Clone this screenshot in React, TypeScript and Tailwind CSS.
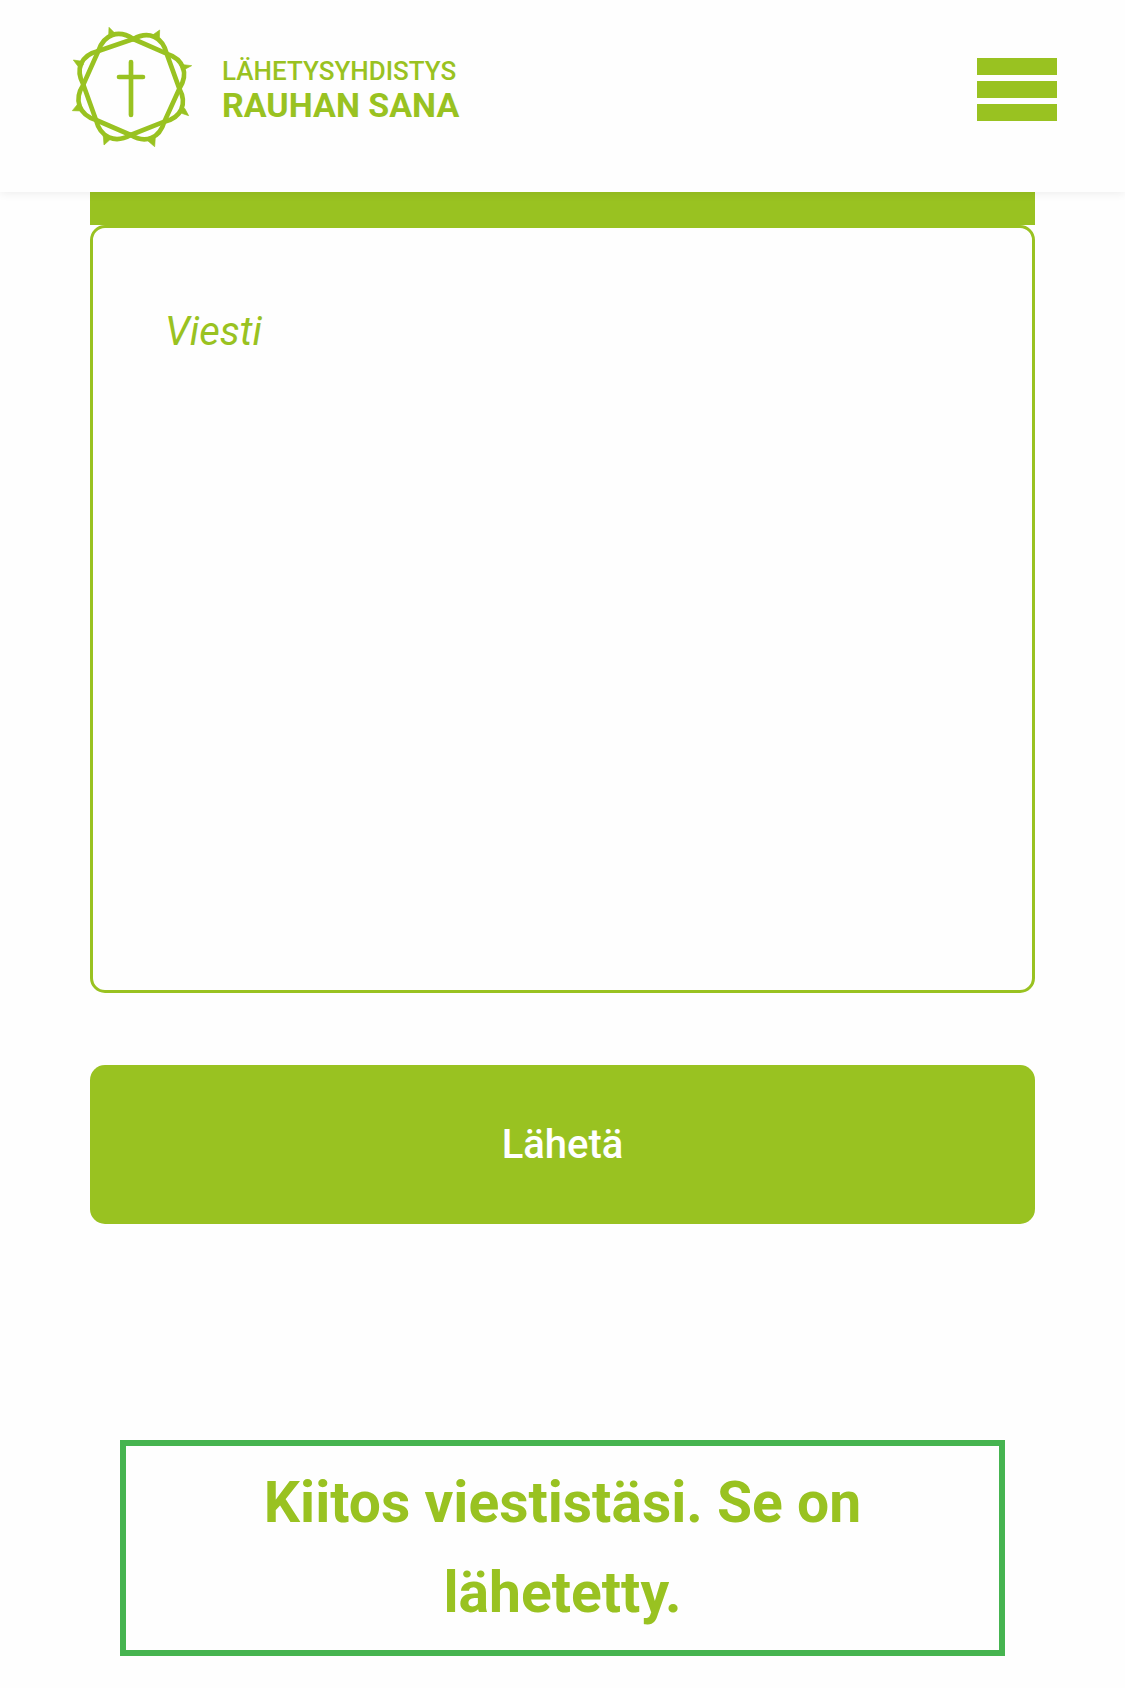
const crownNodes = [
  [220, 72],
  [320, 116],
  [358, 221],
  [313, 320],
  [212, 360],
  [108, 315],
  [70, 209],
  [115, 108],
];

const thorns = [
  "M147 37 L162 52 L164 60 L146 64 Z",
  "M299 45 L298 72 L290 74 L278 60 Z",
  "M395 152 L372 164 L364 165 L360 148 Z",
  "M386 302 L356 292 L362 280 L374 280 Z",
  "M284 395 L264 378 L264 368 L286 366 Z",
  "M132 390 L130 364 L138 356 L152 372 Z",
  "M37 287 L54 266 L62 266 L68 288 Z",
  "M40 135 L67 139 L70 150 L57 158 Z",
];

// Rounded branch bulging outwards over one side of the straight-branched octagon.
function arc(i: number) {
  const from = crownNodes[i];
  const to = crownNodes[(i + 1) % crownNodes.length];
  const dx = to[0] - from[0];
  const dy = to[1] - from[1];
  const along = 0.29;
  const out = 0.38;
  const c1 = [from[0] + along * dx + out * dy, from[1] + along * dy - out * dx];
  const c2 = [to[0] - along * dx + out * dy, to[1] - along * dy - out * dx];
  return `M${from.join(" ")} C${c1.join(" ")} ${c2.join(" ")} ${to.join(" ")}`;
}

function Crown() {
  return (
    <svg viewBox="30 30 372 372" className="size-31 shrink-0" aria-hidden="true">
      <g fill="none" stroke="#99c221" strokeWidth="14" strokeLinejoin="round" strokeLinecap="round">
        <polygon points={crownNodes.map((p) => p.join(",")).join(" ")} />
        {crownNodes.map((_, i) => (
          <path key={i} d={arc(i)} />
        ))}
        <path d="M213 141 V300 M177 186 H249" />
      </g>
      <g fill="#99c221" stroke="#99c221" strokeWidth="2" strokeLinejoin="round">
        {thorns.map((d) => (
          <path key={d} d={d} />
        ))}
      </g>
    </svg>
  );
}

export default function App() {
  return (
    <div className="min-h-screen bg-[#fefefe] font-[Roboto,sans-serif] text-[#99c221]">
      <header className="relative flex h-48 items-start justify-between bg-[#fefefe] pr-17 pl-[70px] shadow-[0_0_10px_rgba(0,0,0,0.09)]">
        <a href="#" className="flex items-start gap-7 pt-[25px]">
          <Crown />
          <span className="flex flex-col pt-7 whitespace-nowrap">
            <span className="text-[26px] leading-9 font-medium">LÄHETYSYHDISTYS</span>
            <span className="text-[34px] leading-8 font-bold">RAUHAN SANA</span>
          </span>
        </a>
        <button type="button" aria-label="Valikko" className="mt-[58px] flex w-20 flex-col gap-[6px]">
          <span className="h-[17px] w-full bg-[#99c221]" />
          <span className="h-[17px] w-full bg-[#99c221]" />
          <span className="h-[17px] w-full bg-[#99c221]" />
        </button>
      </header>
      <main className="px-[90px]">
        <form onSubmit={(e) => e.preventDefault()}>
          <div className="h-[33px] bg-[#99c221]" />
          <textarea
            aria-label="Viesti"
            placeholder="Viesti"
            className="block h-[768px] w-full resize-none rounded-[15px] border-3 border-[#99c221] bg-[#fefefe] px-18 py-[74px] text-[40px] leading-[60px] italic outline-none placeholder:text-[#99c221] placeholder:opacity-100"
          />
          <button
            type="submit"
            className="mt-18 block h-[159px] w-full rounded-[15px] bg-[#99c221] text-[40px] leading-[60px] font-medium text-white"
          >
            Lähetä
          </button>
        </form>
        <div
          role="status"
          className="mx-[30px] mt-54 border-6 border-[#46b450] px-24 py-3 text-center text-[57px] leading-[90px] font-bold"
        >
          Kiitos viestistäsi. Se on lähetetty.
        </div>
      </main>
    </div>
  );
}
